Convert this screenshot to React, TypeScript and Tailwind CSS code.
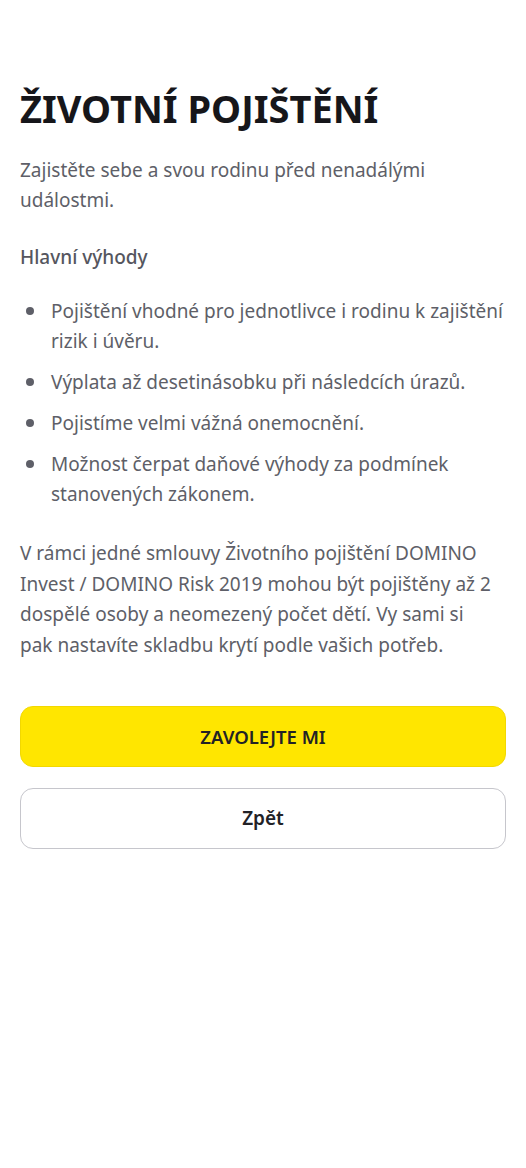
import React from "react";

const items = [
  "Pojištění vhodné pro jednotlivce i rodinu k zajištění rizik i úvěru.",
  "Výplata až desetinásobku při následcích úrazů.",
  "Pojistíme velmi vážná onemocnění.",
  "Možnost čerpat daňové výhody za podmínek stanovených zákonem.",
];

export default function App() {
  return (
    <div
      className="min-h-[1168px] w-full bg-white px-[20px] pt-[82px]"
      style={{ fontFamily: '"Noto Sans", "Liberation Sans", sans-serif' }}
    >
      <h1 className="text-[38px] font-bold leading-[52px] text-[#16161a]">
        ŽIVOTNÍ POJIŠTĚNÍ
      </h1>
      <p className="mt-[21px] text-[19px] leading-[30px] text-[#5e5f68]">
        Zajistěte sebe a svou rodinu před nenadálými událostmi.
      </p>
      <h2 className="mt-[27px] text-[19px] font-medium leading-[30px] text-[#55565e]">
        Hlavní výhody
      </h2>
      <ul className="mt-[24px] flex flex-col gap-[11px]">
        {items.map((t) => (
          <li key={t} className="flex items-start text-[19px] leading-[30px] text-[#5e5f68]">
            <span className="mt-[11px] ml-[6px] mr-[17px] h-[8px] w-[8px] shrink-0 rounded-full bg-[#5e5f68]" />
            <span>{t}</span>
          </li>
        ))}
      </ul>
      <p className="mt-[29px] text-[19px] leading-[30.5px] text-[#5e5f68]">
        V rámci jedné smlouvy Životního pojištění DOMINO
        <br />
        Invest / DOMINO Risk 2019 mohou být pojištěny až 2
        <br />
        dospělé osoby a neomezený počet dětí. Vy sami si
        <br />
        pak nastavíte skladbu krytí podle vašich potřeb.
      </p>
      <div className="mt-[46px] flex flex-col gap-[21px]">
        <button className="flex h-[61px] w-full items-center justify-center rounded-[13px] border border-[#f2d800] bg-[#ffe600] text-[18.5px] font-semibold text-[#222226]">
          ZAVOLEJTE MI
        </button>
        <button className="flex h-[61px] w-full items-center justify-center rounded-[13px] border border-[#c6c6cc] bg-white text-[19px] font-semibold text-[#222226]">
          Zpět
        </button>
      </div>
    </div>
  );
}
